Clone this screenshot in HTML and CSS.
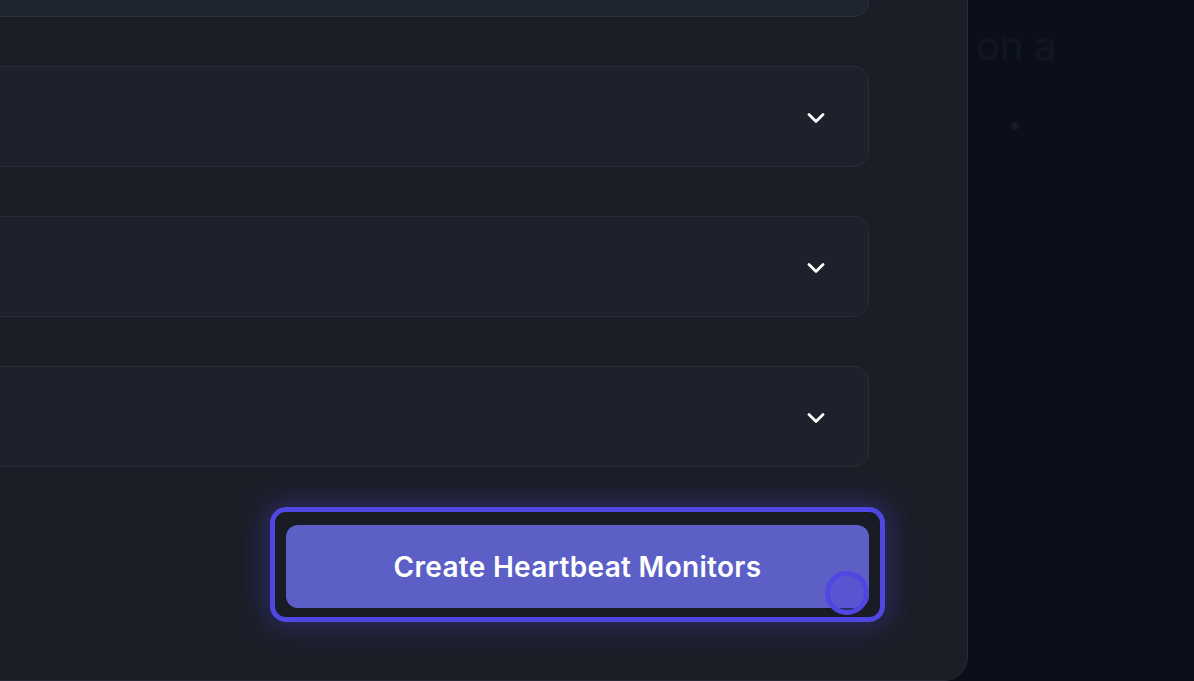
FILE: index.html
```html
<!DOCTYPE html>
<html lang="en">
<head>
<meta charset="utf-8">
<title>Create Heartbeat Monitors</title>
<link rel="stylesheet" href="styles.css">
</head>
<body>
  <div class="page">
    <h1 class="page-title">on a</h1>
    <span class="bullet"></span>
  </div>

  <div class="modal">
    <div class="fields">
      <div class="select select-active"></div>
      <div class="select">
        <svg class="chev" viewBox="0 0 18 10" width="18" height="10"><path d="M2 1.5 L9 8.5 L16 1.5" fill="none" stroke="#fff" stroke-width="2.8" stroke-linecap="round" stroke-linejoin="round"/></svg>
      </div>
      <div class="select">
        <svg class="chev" viewBox="0 0 18 10" width="18" height="10"><path d="M2 1.5 L9 8.5 L16 1.5" fill="none" stroke="#fff" stroke-width="2.8" stroke-linecap="round" stroke-linejoin="round"/></svg>
      </div>
      <div class="select">
        <svg class="chev" viewBox="0 0 18 10" width="18" height="10"><path d="M2 1.5 L9 8.5 L16 1.5" fill="none" stroke="#fff" stroke-width="2.8" stroke-linecap="round" stroke-linejoin="round"/></svg>
      </div>
    </div>
    <div class="actions">
      <div class="focus-ring">
        <button class="primary">Create Heartbeat Monitors</button>
        <span class="touch"></span>
      </div>
    </div>
  </div>
</body>
</html>
```
FILE: styles.css
```css
* { box-sizing: border-box; }

html, body {
  margin: 0;
  width: 1194px;
  height: 681px;
  overflow: hidden;
}

body {
  position: relative;
  background: #0a0f1a;
  font-family: Inter, "Noto Sans", "Liberation Sans", sans-serif;
}

.page {
  padding: 22px 0 0 976px;
  display: flex;
  flex-direction: column;
}

.page-title {
  margin: 0;
  font-size: 40px;
  line-height: 48px;
  font-weight: 500;
  color: #111622;
  letter-spacing: -0.3px;
}

.bullet {
  display: block;
  width: 8px;
  height: 8px;
  border-radius: 50%;
  background: #151a26;
  margin: 52px 0 0 35px;
}

.modal {
  position: absolute;
  left: -100px;
  top: -120px;
  width: 1068px;
  height: 801px;
  background: #1b1e27;
  border: 1px solid #262a34;
  border-radius: 24px;
  padding: 35px 98px 0 40px;
  display: flex;
  flex-direction: column;
}

.fields {
  display: flex;
  flex-direction: column;
  gap: 49px;
}

.select {
  height: 101px;
  border-radius: 15px;
  background: #1e202b;
  border: 1px solid #2a2d38;
  display: flex;
  align-items: center;
  justify-content: flex-end;
  padding: 2px 43px 0 0;
}

.select-active {
  background: #1f2530;
  border-color: #2c313c;
}

.chev { display: block; }

.actions {
  margin-top: 40px;
  margin-right: -16px;
  display: flex;
  justify-content: flex-end;
}

.focus-ring {
  position: relative;
  width: 615px;
  height: 115px;
  border: 5px solid #5047e2;
  border-radius: 16px;
  background: #191c25;
  padding: 13px 11px 9px 11px;
  box-shadow: 0 0 28px 4px rgba(80, 71, 226, 0.34);
}

.primary {
  display: block;
  width: 100%;
  height: 83px;
  border: 0;
  border-radius: 12px;
  background: #5b5fc6;
  color: #ffffff;
  font-family: Inter, "Noto Sans", "Liberation Sans", sans-serif;
  font-size: 28px;
  font-weight: 600;
  letter-spacing: 0.3px;
  padding: 0;
}

.touch {
  position: absolute;
  left: 550px;
  top: 59px;
  width: 44px;
  height: 44px;
  border-radius: 50%;
  border: 5px solid #5047e2;
  background: rgba(80, 71, 226, 0.35);
}
```
